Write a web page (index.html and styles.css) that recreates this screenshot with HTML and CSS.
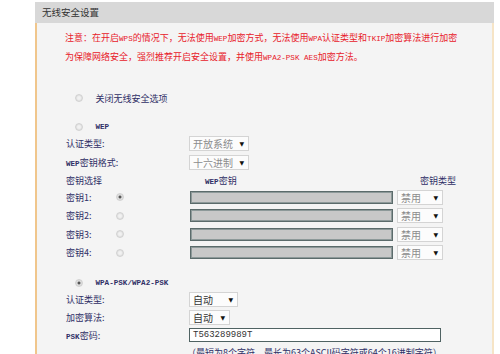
FILE: index.html
```html
<!DOCTYPE html>
<html lang="zh-CN">
<head>
  <meta charset="UTF-8">
  <title>无线安全设置</title>
  <link rel="stylesheet" href="styles.css">
</head>
<body>
  <div class="panel">
    <div class="panel-head">无线安全设置</div>
    <div class="panel-body">
      <p class="notice">注意：在开启<span class="en-n">WPS</span>的情况下，无法使用<span class="en-n">WEP</span>加密方式，无法使用<span class="en-n">WPA</span>认证类型和<span class="en-n">TKIP</span>加密算法进行加密<br>为保障网络安全，强烈推荐开启安全设置，并使用<span class="en-n">WPA2-PSK AES</span>加密方法。</p>

      <!-- 关闭 -->
      <div class="row opt-row row-off">
        <span class="radio"></span><span class="opt">关闭无线安全选项</span>
      </div>

      <!-- WEP -->
      <div class="row opt-row row-wep">
        <span class="radio"></span><span class="opt en">WEP</span>
      </div>
      <div class="row row-field">
        <span class="label">认证类型:</span>
        <span class="select sel-wep dim">开放系统<i>▼</i></span>
      </div>
      <div class="row row-tall">
        <span class="label"><span class="en">WEP</span>密钥格式:</span>
        <span class="select sel-wep dim">十六进制<i>▼</i></span>
      </div>
      <div class="row row-head">
        <span class="label">密钥选择</span>
        <span class="col-key"><span class="en">WEP</span>密钥</span>
        <span>密钥类型</span>
      </div>
      <div class="row row-key">
        <span class="key-label">密钥1:</span>
        <span class="key-radio"><span class="radio checked"></span></span>
        <span class="key-input"></span>
        <span class="select sel-key dim">禁用<i>▼</i></span>
      </div>
      <div class="row row-key">
        <span class="key-label">密钥2:</span>
        <span class="key-radio"><span class="radio"></span></span>
        <span class="key-input"></span>
        <span class="select sel-key dim">禁用<i>▼</i></span>
      </div>
      <div class="row row-key">
        <span class="key-label">密钥3:</span>
        <span class="key-radio"><span class="radio"></span></span>
        <span class="key-input"></span>
        <span class="select sel-key dim">禁用<i>▼</i></span>
      </div>
      <div class="row row-key">
        <span class="key-label">密钥4:</span>
        <span class="key-radio"><span class="radio"></span></span>
        <span class="key-input"></span>
        <span class="select sel-key dim">禁用<i>▼</i></span>
      </div>

      <!-- WPA-PSK -->
      <div class="row opt-row row-wpa">
        <span class="radio checked"></span><span class="opt en">WPA-PSK/WPA2-PSK</span>
      </div>
      <div class="row row-field">
        <span class="label">认证类型:</span>
        <span class="select sel-auto1">自动<i>▼</i></span>
      </div>
      <div class="row row-field">
        <span class="label">加密算法:</span>
        <span class="select sel-auto2">自动<i>▼</i></span>
      </div>
      <div class="row row-field">
        <span class="label"><span class="en">PSK</span>密码:</span>
        <span class="psk-input">T563289989T</span>
      </div>
      <div class="row row-hint">
        <span class="label"></span>
        <span class="hint">（最短为8个字符，最长为63个ASCII码字符或64个16进制字符）</span>
      </div>
    </div>
  </div>
</body>
</html>
```

FILE: styles.css
```css
body {
  margin: 0;
  background: #fff;
  font-family: "Noto Sans CJK SC", sans-serif;
  font-size: 9px;
  color: #2f2f66;
}
.panel {
  margin: 2px 0 0 35px;
  width: 459px;
}
.panel-head {
  height: 21px;
  line-height: 21px;
  background: #d8d8d8;
  color: #333;
  padding-left: 7px;
  font-size: 9.5px;
}
.panel-body {
  background: #f4f4f4;
  border-left: 2px solid #f0c68c;
  border-right: 2px solid #f6e4c6;
  padding: 5px 0 0 29px;
  height: 340px;
  overflow: hidden;
}
.notice {
  margin: 0 0 0 -1px;
  color: #e8202a;
  line-height: 19px;
  height: 38px;
  white-space: nowrap;
}
.en-n {
  font-family: "Liberation Mono", monospace;
  font-size: 7.6px;
  line-height: 8px;
}

.row {
  display: flex;
  align-items: center;
  white-space: nowrap;
}
.row-off { height: 18px; margin-top: 23px; }
.row-wep { height: 14px; margin-top: 13px; }
.row-wpa { height: 14px; margin-top: 14px; }
.row-field { height: 18px; }
.row-tall { height: 20px; }
.row-head { height: 16px; }
.row-key { height: 18.5px; }
.row-hint { height: 16px; }

.opt-row .radio {
  margin-left: 8.5px;
}
.opt {
  margin-left: 13px;
}
.en {
  font-family: "Liberation Mono", monospace;
  font-size: 7.6px;
  font-weight: bold;
}
.label {
  width: 123px;
  flex: none;
}
.col-key {
  margin-left: 16px;
  width: 215px;
}
.key-label {
  width: 50px;
  flex: none;
}
.key-radio {
  width: 74px;
  flex: none;
  display: flex;
}

.radio {
  display: inline-block;
  width: 8px;
  height: 8px;
  box-sizing: border-box;
  border-radius: 50%;
  border: 1px solid #d2d2d2;
  background: radial-gradient(circle, #f1f1f1 0 30%, #dcdcdc 75%);
  flex: none;
}
.radio.checked {
  background: radial-gradient(circle, #555 0 1.2px, #e2e2e2 1.8px, #d6d6d6 75%);
}

.select {
  display: inline-flex;
  align-items: center;
  justify-content: space-between;
  height: 15px;
  box-sizing: border-box;
  border: 1px solid #d4d4d4;
  background: #fcfcfc;
  padding: 0 4px 0 3px;
  color: #333;
  font-size: 10px;
  flex: none;
}
.select i {
  font-style: normal;
  font-family: "DejaVu Sans", sans-serif;
  font-size: 6px;
  color: #111;
}
.select.dim {
  color: #8c8c8c;
}
.sel-wep { width: 60px; }
.sel-key { width: 46px; margin-left: 4px; }
.sel-auto1 { width: 49px; }
.sel-auto2 { width: 41px; }

.key-input {
  width: 203px;
  height: 13px;
  box-sizing: border-box;
  background: #c8c8c8;
  border: 1px solid #5b6b6b;
  box-shadow: inset 0 0 0 1px #8d9999;
  flex: none;
}
.psk-input {
  width: 252px;
  height: 14px;
  box-sizing: border-box;
  background: #fff;
  border: 1px solid #4f6262;
  padding-left: 3px;
  font-family: "Liberation Mono", monospace;
  font-size: 9px;
  line-height: 12px;
  color: #333;
  flex: none;
}
.hint {
  margin-left: -2px;
}
```
